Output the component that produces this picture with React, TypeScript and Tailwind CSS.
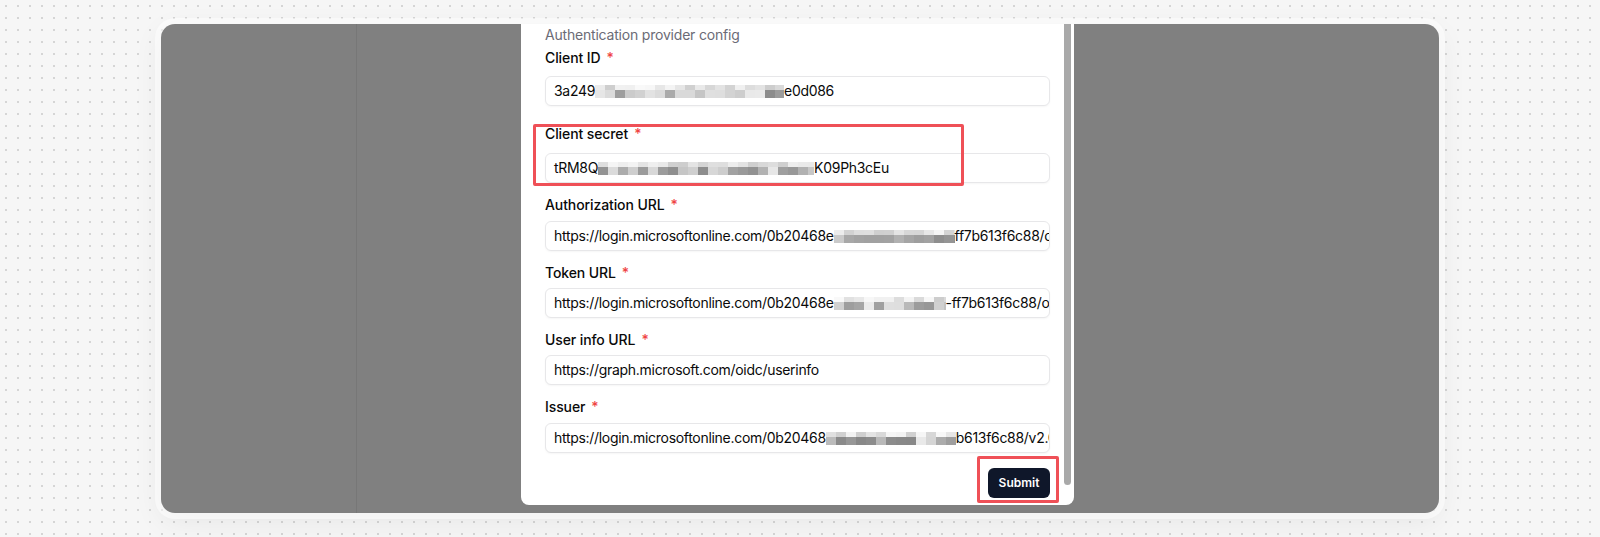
import React from "react";

type Part = string | { blur: number };

const fields: { label: string; parts: Part[]; top: string; gap: string }[] = [
  { label: "Client ID", parts: ["3a249", { blur: 189 }, "e0d086"], top: "mt-[3px]", gap: "mt-[8px]" },
  { label: "Client secret", parts: ["tRM8Q", { blur: 216 }, "K09Ph3cEu"], top: "mt-[18px]", gap: "mt-[9px]" },
  {
    label: "Authorization URL",
    parts: ["https://login.microsoftonline.com/0b20468e", { blur: 121 }, "ff7b613f6c88/oauth2/v2.0/authorize"],
    top: "mt-[12px]",
    gap: "mt-[6px]",
  },
  {
    label: "Token URL",
    parts: ["https://login.microsoftonline.com/0b20468e", { blur: 112 }, "-ff7b613f6c88/oauth2/v2.0/token"],
    top: "mt-[12px]",
    gap: "mt-[5px]",
  },
  { label: "User info URL", parts: ["https://graph.microsoft.com/oidc/userinfo"], top: "mt-[12px]", gap: "mt-[5px]" },
  {
    label: "Issuer",
    parts: ["https://login.microsoftonline.com/0b20468", { blur: 130 }, "b613f6c88/v2.0"],
    top: "mt-[12px]",
    gap: "mt-[6px]",
  },
];

// pseudo random grey for the redaction mosaic
function grey(i: number, seed: number, row: number) {
  const v = Math.abs(Math.sin(i * 12.9898 + seed * 78.233 + row * 37.719) * 43758.5453) % 1;
  const c = row === 0 ? Math.round(205 + v * 45) : Math.round(135 + v * 100);
  return `rgb(${c},${c},${c})`;
}

function Mosaic({ width, seed }: { width: number; seed: number }) {
  const count = Math.ceil(width / 10);
  const cells = Array.from({ length: count });
  return (
    <span className="flex flex-col shrink-0 overflow-hidden mt-[1px]" style={{ width }}>
      <span className="flex h-[5px]">
        {cells.map((_, i) => (
          <span key={i} className="w-[10px] shrink-0" style={{ backgroundColor: grey(i, seed, 0) }} />
        ))}
      </span>
      <span className="flex h-[8px]">
        {cells.map((_, i) => (
          <span key={i} className="w-[10px] shrink-0" style={{ backgroundColor: grey(i, seed, 1) }} />
        ))}
      </span>
    </span>
  );
}

function Field({ label, parts, top, gap, seed }: { label: string; parts: Part[]; top: string; gap: string; seed: number }) {
  return (
    <div className={top}>
      <div className="flex items-start gap-[6px] h-5 text-sm leading-5 font-medium text-[#0a0a0a] tracking-[-0.1px]">
        {label}
        <span className="text-[#ef4444] text-sm leading-5">*</span>
      </div>
      <div
        className={`${gap} h-[30px] rounded-md border border-[#e7e7e9] bg-white shadow-[0_1px_2px_rgba(0,0,0,0.04)] px-2 flex items-center overflow-hidden whitespace-nowrap text-sm text-[#0a0a0a] tracking-[-0.3px]`}
      >
        {parts.map((p, i) =>
          typeof p === "string" ? (
            <span key={i} className="shrink-0">
              {p}
            </span>
          ) : (
            <Mosaic key={i} width={p.blur} seed={seed * 7 + i} />
          )
        )}
      </div>
    </div>
  );
}

export default function App() {
  return (
    <div className="h-[537px] w-[1600px] px-[161px] py-[24px] bg-[#f6f6f6] bg-[radial-gradient(circle,#d5d5d5_1.1px,transparent_1.4px)] bg-[size:12px_12px] font-['Inter',sans-serif]">
      <div className="relative h-[489px] rounded-[14px] bg-[#808080] overflow-hidden flex shadow-[0_0_0_6px_rgba(255,255,255,0.5),0_8px_30px_rgba(0,0,0,0.07)]">
        <div className="w-[196px] h-full border-r border-[#777777]" />

        {/* dialog */}
        <div className="absolute left-[360px] top-0 w-[553px] h-[481px] bg-white rounded-b-lg">
          <div className="px-6 pt-[1px] pb-[7px] flex flex-col">
            <div className="h-5 text-sm leading-5 text-[#6b6b76] tracking-[-0.2px]">Authentication provider config</div>
            {fields.map((f, i) => (
              <Field key={f.label} {...f} seed={i + 1} />
            ))}
            <div className="mt-[15px] flex justify-end">
              <button className="h-[30px] w-[62px] rounded-md bg-[#0f172a] text-white text-xs font-semibold">
                Submit
              </button>
            </div>
          </div>

          {/* scrollbar thumb */}
          <div className="absolute right-[3px] top-0 w-[7px] h-[461px] rounded-b-full bg-[#a9a9a9]" />

          {/* annotations */}
          <div className="absolute left-[12px] top-[100px] w-[431px] h-[62px] border-[3px] border-[#ef5057] rounded-[2px]" />
          <div className="absolute left-[456px] top-[432px] w-[82px] h-[47px] border-[3px] border-[#ef5057] rounded-[2px]" />
        </div>
      </div>
    </div>
  );
}
